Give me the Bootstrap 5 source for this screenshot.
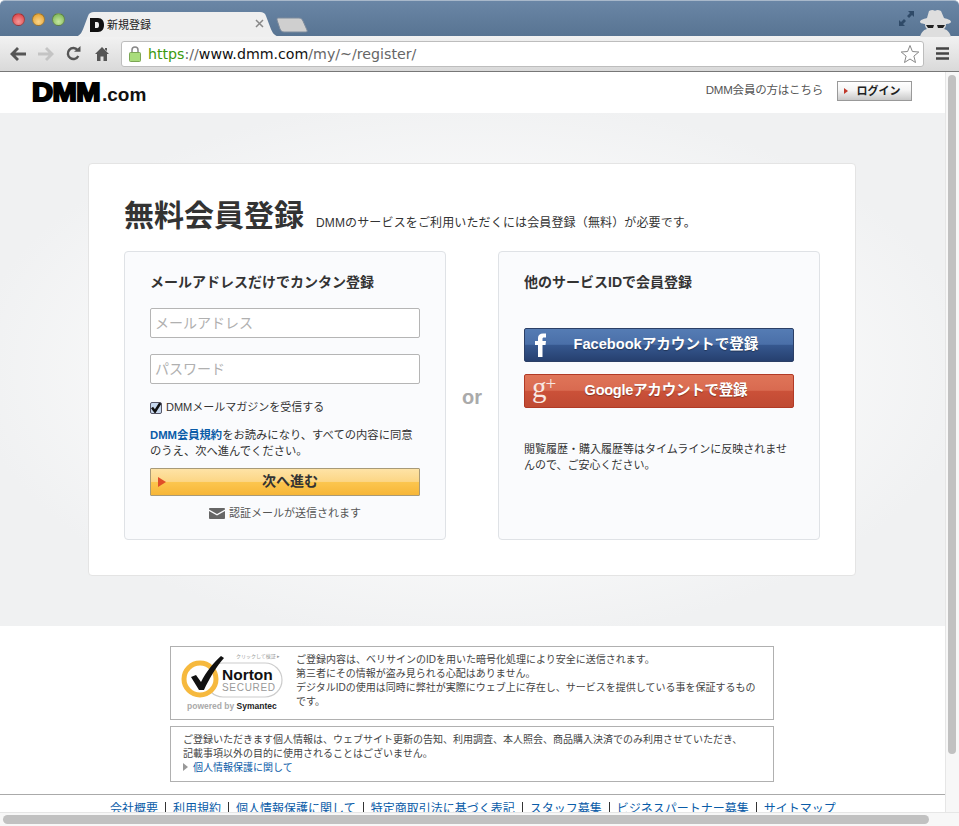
<!DOCTYPE html>
<html lang="ja">
<head>
<meta charset="UTF-8">
<title>新規登録</title>
<link rel="stylesheet" href="https://cdn.jsdelivr.net/npm/bootstrap@5.3.3/dist/css/bootstrap.min.css">
<style>
html, body { height: 100%; overflow: hidden; }
body { font-family: "Liberation Sans", "Noto Sans CJK JP", sans-serif; font-size: 11px; color: #333; background: #fff; width: 959px; height: 826px; }
a { text-decoration: none; color: #0a5ca8; }

/* browser frame */
.titlebar { height: 36px; background: linear-gradient(#6a86a6, #587492); border-top: 1px solid #a8b8ca; border-radius: 5px 5px 0 0; position: relative; }
.light { width: 13px; height: 13px; border-radius: 50%; border: 1px solid rgba(0,0,0,.3); }
.lights { padding: 12px 0 0 12px; gap: 7px; }
.l-red { background: radial-gradient(circle at 50% 70%, #f59a9a, #d8343a); }
.l-amber { background: radial-gradient(circle at 50% 70%, #fbd58a, #e09a22); }
.l-green { background: radial-gradient(circle at 50% 70%, #c6e8a0, #72ae4c); }
.tab-shape { position: absolute; left: 74px; top: 11px; }
.tab-new { position: absolute; left: 276px; top: 16px; }
.tab-title { position: absolute; left: 107px; top: 16px; font-size: 11px; color: #222; }
.tab-fav { position: absolute; left: 90px; top: 17px; }
.tab-x { position: absolute; left: 255px; top: 18px; }
.win-expand { position: absolute; left: 898px; top: 9px; }
.spy { position: absolute; left: 919px; top: 7px; }
.toolbar { height: 36px; background: linear-gradient(#f2f2f2, #d9d9d9); border-bottom: 1px solid #777; padding: 0 0 0 10px; }
.ms-tool-12 { margin-left: 12px; }
.ms-tool-14 { margin-left: 14px; }
.omnibox { position: relative; flex: 0 0 803px; margin-left: 12px; height: 26px; background: #fff; border: 1px solid #bdbdbd; border-radius: 3px; font-family: "DejaVu Sans", sans-serif; font-size: 14.2px; line-height: 24px; color: #666; padding-left: 26px; white-space: nowrap; }
.omnibox .u-scheme { color: #3c9a0e; }
.omnibox .u-host { color: #111; }
.omni-lock { position: absolute; left: 7px; top: 4px; }
.omni-star { position: absolute; right: 3px; top: 2px; }

/* page */
.viewport { height: 754px; }
.page-col { width: 945px; height: 740px; overflow: hidden; }
.vbar { width: 14px; background: #f7f7f7; border-left: 1px solid #e6e6e6; padding: 3px 3px 0 2px; }
.vbar-thumb { height: 679px; background: #c1c1c1; border-radius: 4px; }
.hbar { height: 14px; background: #f7f7f7; border-top: 1px solid #e6e6e6; padding: 2px 0 0 3px; margin-top: -14px; position: relative; width: 959px; }
.hbar-thumb { width: 926px; height: 9px; background: #c1c1c1; border-radius: 5px; }

.site-head { height: 41px; padding: 9px 33px 0 32px; }
.logo-dmm { font-size: 26px; line-height: 22px; font-weight: 700; color: #000; letter-spacing: -.5px; -webkit-text-stroke: 2px #000; display: inline-block; width: 70px; transform: scaleX(1.12); transform-origin: left center; }
.logo-com { font-size: 19px; line-height: 24px; font-weight: 700; color: #111; padding-top: 2px; }
.site-login { height: 20px; }
.member-note { font-size: 11.5px; letter-spacing: -.2px; color: #555; margin-right: 14px; }
.login-btn { width: 75px; height: 20px; background: linear-gradient(#fff, #f4f4f4 45%, #c9c9c9); border: 1px solid #999; border-radius: 0; font-size: 11px; font-weight: 700; color: #222; padding: 0 0 0 8px; line-height: 17px; position: relative; }
.login-btn::before { content: ""; position: absolute; left: 6px; top: 6px; border-left: 4px solid #c0392b; border-top: 3.5px solid transparent; border-bottom: 3.5px solid transparent; }

.reg-area { height: 513px; background: radial-gradient(ellipse at center, #fff 25%, #f0f1f2 75%); padding: 50px 89px 0 88px; }
.reg-card { width: 768px; height: 413px; border: 1px solid #e4e4e4; border-radius: 4px; padding: 35px 35px 0 35px; background: #fff; }
.reg-title { font-size: 30px; line-height: 34px; font-weight: 700; color: #333; margin: 0; }
.reg-lead { font-size: 12px; letter-spacing: .14px; color: #333; margin: 0 0 0 12px; padding-bottom: 1px; }
.panel-box { width: 322px; height: 289px; background: #fafbfd; border: 1px solid #dfe2e6; border-radius: 4px; padding: 21px 25px 0 25px; margin-top: 18px; }
.panel-head { font-size: 14px; line-height: 18px; font-weight: 700; color: #333; margin: 0; }
.or-word { font-size: 20px; font-weight: 700; color: #aaa; padding-top: 21px; }
.reg-input.form-control { width: 270px; height: 30px; border: 1px solid #b5b5b5; border-radius: 2px; padding: 0 4px; font-size: 14px; box-shadow: none; background: #fff; }
.reg-input.form-control::placeholder { color: #b0b0b0; }
.reg-input-top { margin-top: 17px; }
.reg-input-next { margin-top: 16px; }
.reg-check { min-height: 0; padding: 0; margin: 16px 0 0; gap: 4px; color: #333; font-size: 11px; line-height: 15px; }
.reg-check .form-check-input { width: 12px; height: 12px; margin: 0; float: none; border-radius: 2px; border-color: #556; background-color: #c7d8ee; }
.reg-check .form-check-input:checked { background-color: #c7d8ee; border-color: #556; background-size: 14px; background-image: url("data:image/svg+xml,%3csvg xmlns='http://www.w3.org/2000/svg' viewBox='0 0 14 14'%3e%3cpath fill='none' stroke='%23111' stroke-width='2.6' d='M3 6.500L6 10.500L12 1'/%3e%3c/svg%3e"); }
.terms { font-size: 11.3px; line-height: 16px; margin: 12px 0 0; color: #333; }
.terms a { font-weight: 700; }
.next-btn { width: 270px; height: 28px; margin-top: 9px; border: 1px solid #a89a78; border-radius: 1px; background: linear-gradient(#fee3a6, #fcd685 48%, #fcc64f 50%, #f7b637); font-size: 14px; font-weight: 700; color: #333; padding: 0 0 2px 10px; line-height: 22px; position: relative; }
.next-btn::before { content: ""; position: absolute; left: 7px; top: 8px; border-left: 8px solid #e04e28; border-top: 5px solid transparent; border-bottom: 5px solid transparent; }
.sent-note { margin-top: 10px; color: #555; font-size: 11px; line-height: 14px; gap: 4px; }
.sns-btn { width: 270px; border-radius: 2px; font-size: 14.6px; font-weight: 700; color: #fff; line-height: 30px; text-shadow: 0 1px 1px rgba(0,0,0,.35); position: relative; padding: 0 0 0 14px; }
.sns-btn:hover { color: #fff; }
.sns-fb { height: 34px; margin-top: 37px; border: 1px solid #2b3f66; background: linear-gradient(#557cb4, #4a6fa8 48%, #36588f 50%, #26406f); }
.sns-gg { height: 34px; margin-top: 12px; border: 1px solid #b13a26; background: linear-gradient(#df7559, #d96a50 48%, #cb5139 50%, #bf4a33); letter-spacing: -.3px; }
.sns-ico { position: absolute; left: 8px; top: 3px; }
.sns-g { position: absolute; left: 7px; top: -5px; font-family: "Liberation Serif", serif; font-weight: 400; font-size: 29px; line-height: 34px; color: #f8e8e2; text-shadow: none; letter-spacing: 0; }
.sns-g sup { font-size: 19px; top: -.38em; left: -1px; }
.sns-note { font-size: 11px; line-height: 16px; margin: 33px 0 0; color: #333; }

.notice-wrap { padding: 20px 0 0 170px; }
.notice-box { width: 604px; border: 1px solid #b0b0b0; font-size: 10px; line-height: 14px; color: #444; }
.notice-top { height: 74px; padding: 5px 14px 0 5px; gap: 10px; }
.notice-top-text { padding-top: 1px; }
.notice-priv { height: 56px; margin-top: 6px; padding: 6px 12px 0 12px; }
.notice-priv p { margin: 0; }
.notice-priv a::before { content: ""; display: inline-block; border-left: 5px solid #999; border-top: 4px solid transparent; border-bottom: 4px solid transparent; margin-right: 5px; }
.foot-links { border-top: 1px solid #aaa; margin: 12px 0 0 0; padding: 6px 0 0 110px; font-size: 12px; line-height: 16px; white-space: nowrap; }
.foot-links a + a { border-left: 1px solid #333; margin-left: 7px; padding-left: 7px; }
</style>
</head>
<body>

<div class="titlebar">
  <div class="d-flex lights">
    <div class="light l-red"></div><div class="light l-amber"></div><div class="light l-green"></div>
  </div>
  <svg class="tab-shape" width="210" height="25"><path d="M0 25C7 24 8 20 11 12L14 4C15 1 17 0 20 0H186C189 0 191 1 192 4L195 12C198 20 199 24 207 25Z" fill="#efefef"/></svg>
  <svg class="tab-new" width="34" height="16"><path d="M2 1H23C25 1 26 2 27 4L31 13C32 15 30 15 29 15H8C6 15 5 14 4 12L1 3C1 2 1 1 2 1Z" fill="#cfcfcf" stroke="#7d8b9c"/></svg>
  <svg class="tab-fav" width="15" height="14"><path d="M0 0H8C12 0 14 3 14 7S12 14 8 14H0V0ZM5 4V10H7C8.500 10 9 9 9 7S8.500 4 7 4Z" fill="#111" fill-rule="evenodd"/></svg>
  <span class="tab-title">新規登録</span>
  <svg class="tab-x" width="10" height="10"><path d="M1 1L8 8M8 1L1 8" stroke="#888" stroke-width="1.500"/></svg>
  <svg class="win-expand" width="17" height="17"><path d="M10 1H16V7L14 5L11 8L9 6L12 3ZM1 10V16H7L5 14L8 11L6 9L3 12Z" fill="#2f4a68"/></svg>
  <svg class="spy" width="34" height="29"><path d="M8 10L10 3C14 1 16 3 16 3C16 3 18 1 22 3L25 10C29 11 32 12 32 14C32 15 29 16 27 16C27 19 26 20 25 21C29 22 31 25 32 29H1C2 25 4 22 8 21C7 20 6 19 6 16C4 16 1 15 1 14C1 12 4 11 8 10Z" fill="#dedede"/><path d="M7 17H15L14 20H9ZM18 17H26L24 20H19Z" fill="#222"/></svg>
</div>

<div class="toolbar d-flex align-items-center">
  <svg width="16" height="14" viewBox="0 0 16 14"><path d="M7 0L9 2L5.500 5.500H16V8.500H5.500L9 12L7 14L0 7Z" fill="#555"/></svg>
  <svg width="16" height="14" viewBox="0 0 16 14" class="ms-tool-12"><path d="M9 0L7 2L10.500 5.500H0V8.500H10.500L7 12L9 14L16 7Z" fill="#c4c4c4"/></svg>
  <svg width="15" height="15" viewBox="0 0 15 15" class="ms-tool-12"><path d="M12.300 10A5.500 5.500 0 1 1 11.600 4" fill="none" stroke="#555" stroke-width="2.400"/><path d="M8 5.800H14.500V0Z" fill="#555"/></svg>
  <svg width="14" height="14" viewBox="0 0 14 14" class="ms-tool-14"><path d="M7 0L14 7H12V14H8.500V9.500H5.500V14H2V7H0ZM10 1H12V4L10 2.500Z" fill="#555"/></svg>
  <div class="omnibox">
    <svg class="omni-lock" width="12" height="16"><path d="M3 7V4A3 3 0 0 1 9 4V7" fill="none" stroke="#888" stroke-width="1.500"/><rect x=".5" y="6.500" width="11" height="9" rx="1" fill="#a9dc7c" stroke="#7ba654"/></svg>
    <span class="u-scheme">https</span>://<span class="u-host">www.dmm.com</span>/my/~/register/
    <svg class="omni-star" width="20" height="20"><path d="M10 1.500L12.400 7.500L18.800 8L13.900 12.100L15.500 18.500L10 15L4.500 18.500L6.100 12.100L1.200 8L7.600 7.500Z" fill="#fff" stroke="#888"/></svg>
  </div>
  <svg class="ms-tool-12" width="14" height="14"><path d="M0 1.500H13M0 6.500H13M0 11.500H13" stroke="#444" stroke-width="2.600"/></svg>
</div>

<div class="viewport d-flex">
  <div class="page-col">
    <div class="site-head d-flex justify-content-between">
      <div class="d-flex"><span class="logo-dmm">DMM</span><span class="logo-com">.com</span></div>
      <div class="d-flex align-items-center site-login">
        <span class="member-note">DMM会員の方はこちら</span>
        <button class="btn login-btn" type="button">ログイン</button>
      </div>
    </div>

    <div class="reg-area">
      <div class="card reg-card">
        <div class="d-flex align-items-end">
          <h1 class="reg-title">無料会員登録</h1>
          <p class="reg-lead">DMMのサービスをご利用いただくには会員登録（無料）が必要です。</p>
        </div>
        <div class="d-flex justify-content-between">
          <div class="panel-box">
            <h2 class="panel-head">メールアドレスだけでカンタン登録</h2>
            <input class="form-control reg-input reg-input-top" type="text" placeholder="メールアドレス">
            <input class="form-control reg-input reg-input-next" type="password" placeholder="パスワード">
            <div class="form-check d-flex align-items-center reg-check">
              <input class="form-check-input" type="checkbox" id="mailmag" checked>
              <label for="mailmag">DMMメールマガジンを受信する</label>
            </div>
            <p class="terms"><a href="#">DMM会員規約</a>をお読みになり、すべての内容に同意<br>のうえ、次へ進んでください。</p>
            <button class="btn next-btn" type="button">次へ進む</button>
            <div class="sent-note d-flex justify-content-center align-items-center">
              <svg width="16" height="11" viewBox="0 0 16 11"><path d="M1 0H15C15.500 0 16 .5 16 1V1.500L8 6L0 1.500V1C0 .5 .5 0 1 0ZM0 3L8 7.500L16 3V10C16 10.500 15.500 11 15 11H1C.5 11 0 10.500 0 10Z" fill="#666"/></svg>
              <span>認証メールが送信されます</span>
            </div>
          </div>
          <div class="or-word d-flex align-items-center">or</div>
          <div class="panel-box">
            <h2 class="panel-head">他のサービスIDで会員登録</h2>
            <a class="btn sns-btn sns-fb d-block" href="#">
              <svg class="sns-ico" width="16" height="26" viewBox="0 0 16 26"><path d="M5 25V13H2V9H5V6C5 3 7 1.500 10 1.500H13V5.500H11C9.800 5.500 9.500 6 9.500 7V9H13L12.500 13H9.500V25Z" fill="#fff"/></svg>
              Facebookアカウントで登録
            </a>
            <a class="btn sns-btn sns-gg d-block" href="#">
              <span class="sns-g">g<sup>+</sup></span>
              Googleアカウントで登録
            </a>
            <p class="sns-note">閲覧履歴・購入履歴等はタイムラインに反映されませんので、ご安心ください。</p>
          </div>
        </div>
      </div>
    </div>

    <div class="notice-wrap">
      <div class="notice-box notice-top d-flex">
        <svg width="110" height="66" viewBox="0 0 110 66" class="flex-shrink-0">
          <text x="60" y="6" font-size="5" fill="#999">クリックして検証 ▸</text>
          <rect x="30" y="11" width="76" height="34" rx="17" fill="#fff" stroke="#ccc" stroke-width="1.200"/>
          <circle cx="24" cy="27" r="16" fill="#fff" stroke="#f6b93e" stroke-width="5"/>
          <path d="M15 25L20 23L25 30C30 20 38 10 45 4L48 6C40 15 33 27 28 38H23Z" fill="#111"/>
          <text x="46" y="28" font-size="15.500" font-weight="700" fill="#111" font-family="Liberation Sans">Norton</text>
          <text x="46" y="39" font-size="10" letter-spacing=".7" fill="#999" font-family="Liberation Sans">SECURED</text>
          <text x="11" y="57" font-size="8.500" font-weight="700" fill="#aaa" font-family="Liberation Sans">powered by <tspan fill="#222">Symantec</tspan></text>
        </svg>
        <div class="notice-top-text">ご登録内容は、ベリサインのIDを用いた暗号化処理により安全に送信されます。<br>第三者にその情報が盗み見られる心配はありません。<br>デジタルIDの使用は同時に弊社が実際にウェブ上に存在し、サービスを提供している事を保証するものです。</div>
      </div>
      <div class="notice-box notice-priv">
        <p>ご登録いただきます個人情報は、ウェブサイト更新の告知、利用調査、本人照会、商品購入決済でのみ利用させていただき、<br>記載事項以外の目的に使用されることはございません。</p>
        <a href="#">個人情報保護に関して</a>
      </div>
    </div>
    <div class="foot-links">
      <a href="#">会社概要</a><a href="#">利用規約</a><a href="#">個人情報保護に関して</a><a href="#">特定商取引法に基づく表記</a><a href="#">スタッフ募集</a><a href="#">ビジネスパートナー募集</a><a href="#">サイトマップ</a>
    </div>
  </div>
  <div class="vbar"><div class="vbar-thumb"></div></div>
</div>
<div class="hbar"><div class="hbar-thumb"></div></div>

<script src="https://cdn.jsdelivr.net/npm/bootstrap@5.3.3/dist/js/bootstrap.bundle.min.js"></script>
</body>
</html>
